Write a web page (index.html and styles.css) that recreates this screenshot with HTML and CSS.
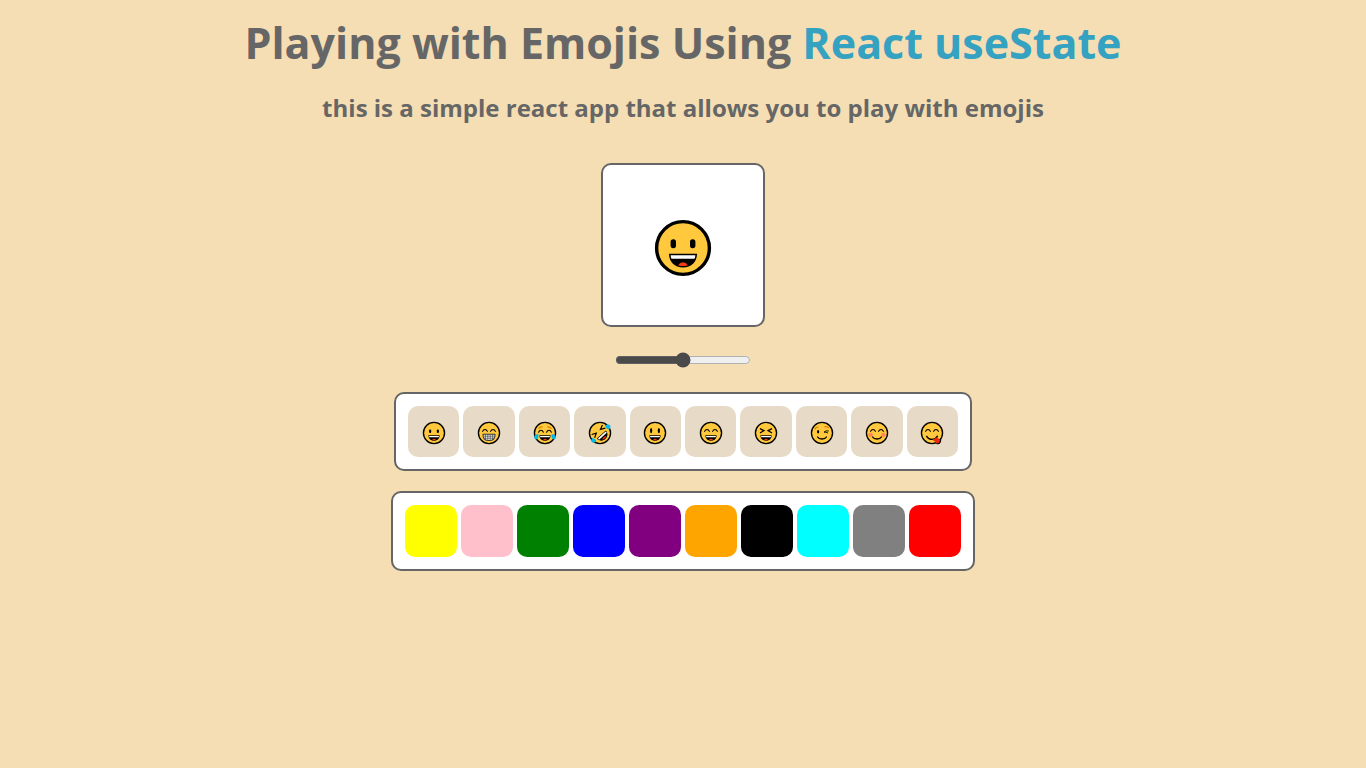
FILE: index.html
```html
<!DOCTYPE html>
<html lang="en">
<head>
<meta charset="utf-8">
<meta name="viewport" content="width=device-width, initial-scale=1">
<title>Playing with Emojis</title>
<link rel="stylesheet" href="styles.css">
</head>
<body>
<svg class="sprite" aria-hidden="true">
  <symbol id="face" viewBox="-30 -30 60 60"><circle r="26.4" fill="#ffc83d" stroke="#000" stroke-width="3.4"/></symbol>
  <symbol id="laugh" viewBox="-30 -30 60 60">
    <path d="M-14 5.7H14C14 14 8.500 19.500 0 19.500S-14 14-14 5.700Z"/>
    <path d="M-12.300 7.300H12.300Q12.300 9.500 11.500 10.800H-11.500Q-12.300 9.500-12.300 7.300Z" fill="#fff"/>
    <path d="M-5 17.200Q-3 14.300 0 14.300T5 17.200Q0 19 -5 17.200Z" fill="#f03a17"/>
  </symbol>
  <symbol id="arcs" viewBox="-30 -30 60 60"><path d="M-16-4Q-14-9-10-9T-4-4M4-4Q6-9 10-9T16-4" fill="none" stroke="#000" stroke-width="2.600" stroke-linecap="round"/></symbol>
  <symbol id="smile" viewBox="-30 -30 60 60"><path d="M-11 10Q-8 15 0 15T11 10" fill="none" stroke="#000" stroke-width="3.400" stroke-linecap="round"/></symbol>
  <symbol id="grin" viewBox="-30 -30 60 60"><use href="#face" x="-30" y="-30" width="60" height="60"/><rect x="-12.400" y="-8.800" width="5.400" height="9" rx="2.600"/><rect x="7" y="-8.800" width="5.400" height="9" rx="2.600"/><use href="#laugh" x="-30" y="-30" width="60" height="60"/></symbol>
</svg>
<main class="app">
  <h1 class="title">Playing with Emojis Using <span class="accent">React useState</span></h1>
  <h2 class="subtitle">this is a simple react app that allows you to play with emojis</h2>
  <div class="stage"><svg class="emoji-large" role="img" aria-label="Grinning face"><use href="#grin"/></svg></div>
  <input class="size" type="range" min="0" max="100" value="50" aria-label="Emoji size">
  <div class="panel emojis">
    <button class="tile" type="button" aria-label="Grinning face"><svg class="emoji"><use href="#grin"/></svg></button>
    <button class="tile" type="button" aria-label="Beaming face"><svg class="emoji" viewBox="-30 -30 60 60"><use href="#face" x="-30" y="-30" width="60" height="60"/><use href="#arcs" x="-30" y="-30" width="60" height="60"/><path d="M-15 3H15C16 14 10 19 0 19S-16 14-15 3Z" fill="#fff" stroke="#333" stroke-width="2.600"/><path d="M-15 8H15M-13 13H13M-9 3V17M-3 3V19M3 3V19M9 3V17" fill="none" stroke="#444" stroke-width="1.800"/></svg></button>
    <button class="tile" type="button" aria-label="Tears of joy"><svg class="emoji" viewBox="-30 -30 60 60"><use href="#face" x="-30" y="-30" width="60" height="60"/><path d="M-16-11Q-12-16-6-15M6-15Q12-16 16-11" fill="none" stroke="#d67d00" stroke-width="3"/><use href="#arcs" x="-30" y="-28" width="60" height="60"/><use href="#laugh" x="-30" y="-30" width="60" height="60"/><path d="M-16 3C-22 2-28 6-27 12C-26 17-19 17-17 12ZM16 3C22 2 28 6 27 12C26 17 19 17 17 12Z" fill="#00b9e8"/></svg></button>
    <button class="tile" type="button" aria-label="Rolling on the floor laughing"><svg class="emoji" viewBox="-30 -30 60 60"><use href="#face" x="-30" y="-30" width="60" height="60"/><g transform="rotate(-42)"><path d="M-18-11L-7-6L-18 0M18-11L7-6L18 0" fill="none" stroke="#000" stroke-width="3"/><path d="M-15 5H15C15 14 9 20 0 20S-15 14-15 5Z"/><path d="M-13 6.500H13V11H-13Z" fill="#fff"/><ellipse cy="16" rx="6" ry="2" fill="#f03a17"/></g><path d="M12-19Q22-24 26-18Q27-9 20-9Q15-12 12-19ZM-18 12Q-25 18-20 23Q-12 27-9 18Z" fill="#00b9e8"/></svg></button>
    <button class="tile" type="button" aria-label="Big eyes grin"><svg class="emoji" viewBox="-30 -30 60 60"><use href="#face" x="-30" y="-30" width="60" height="60"/><ellipse cx="-9.700" cy="-6" rx="2.800" ry="6.500"/><ellipse cx="9.700" cy="-6" rx="2.800" ry="6.500"/><use href="#laugh" x="-30" y="-30" width="60" height="60"/></svg></button>
    <button class="tile" type="button" aria-label="Smiling eyes grin"><svg class="emoji" viewBox="-30 -30 60 60"><use href="#face" x="-30" y="-30" width="60" height="60"/><use href="#arcs" x="-30" y="-30" width="60" height="60"/><use href="#laugh" x="-30" y="-30" width="60" height="60"/></svg></button>
    <button class="tile" type="button" aria-label="Squinting face"><svg class="emoji" viewBox="-30 -30 60 60"><use href="#face" x="-30" y="-30" width="60" height="60"/><path d="M-15-11L-5-6L-15 0M15-11L5-6L15 0" fill="none" stroke="#000" stroke-width="3"/><use href="#laugh" x="-30" y="-30" width="60" height="60"/></svg></button>
    <button class="tile" type="button" aria-label="Winking face"><svg class="emoji" viewBox="-30 -30 60 60"><use href="#face" x="-30" y="-30" width="60" height="60"/><path d="M-18-9Q-16-15-9-15M6-15Q12-18 17-12" fill="none" stroke="#d67d00" stroke-width="3"/><ellipse cx="-9.700" cy="-3" rx="2.800" ry="4.500"/><path d="M17-5Q9-7 5-2Q9-3 15 0" fill="none" stroke="#000" stroke-width="2.200"/><use href="#smile" x="-30" y="-30" width="60" height="60"/></svg></button>
    <button class="tile" type="button" aria-label="Blushing face"><svg class="emoji" viewBox="-30 -30 60 60"><use href="#face" x="-30" y="-30" width="60" height="60"/><circle cx="-16" cy="5" r="5.500" fill="#ff8a57"/><circle cx="16" cy="5" r="5.500" fill="#ff8a57"/><use href="#arcs" x="-30" y="-30" width="60" height="60"/><use href="#smile" x="-30" y="-30" width="60" height="60"/></svg></button>
    <button class="tile" type="button" aria-label="Savoring food"><svg class="emoji" viewBox="-30 -30 60 60"><use href="#face" x="-30" y="-30" width="60" height="60"/><use href="#arcs" x="-30" y="-30" width="60" height="60"/><path d="M-14 7Q-9 16 1 16Q10 15 14 7" fill="none" stroke="#000" stroke-width="3.400"/><path d="M2 16L14 10Q17 16 21 19Q23 27 15 27Q10 27 8 21Q3 21 2 16Z" fill="#e8290b"/><path d="M11 26Q21 30 22 16" fill="none" stroke="#000" stroke-width="2.600"/></svg></button>
  </div>
  <div class="panel colors">
    <button class="swatch yellow" type="button" aria-label="Yellow"></button>
    <button class="swatch pink" type="button" aria-label="Pink"></button>
    <button class="swatch green" type="button" aria-label="Green"></button>
    <button class="swatch blue" type="button" aria-label="Blue"></button>
    <button class="swatch purple" type="button" aria-label="Purple"></button>
    <button class="swatch orange" type="button" aria-label="Orange"></button>
    <button class="swatch black" type="button" aria-label="Black"></button>
    <button class="swatch cyan" type="button" aria-label="Cyan"></button>
    <button class="swatch gray" type="button" aria-label="Gray"></button>
    <button class="swatch red" type="button" aria-label="Red"></button>
  </div>
</main>
</body>
</html>
```
FILE: styles.css
```css
* { box-sizing: border-box; }
body {
  margin: 0;
  background: #f5deb3;
  color: #666;
  font-family: "Segoe UI", "Open Sans", "Noto Sans", sans-serif;
}
.sprite { display: block; width: 0; height: 0; }
.app {
  display: flex;
  flex-direction: column;
  align-items: center;
  padding: 13px 16px;
}
.title, .subtitle { margin: 0; font-weight: 660; text-align: center; }
.title { font-size: 43px; line-height: 60px; }
.accent { color: #35a2c2; }
.subtitle { margin-top: 19px; font-size: 24px; line-height: 32px; }
.stage {
  display: grid;
  place-items: center;
  width: 164px;
  height: 164px;
  margin-top: 39px;
  padding-top: 6px;
  border: 2px solid #666;
  border-radius: 10px;
  background: #fff;
}
.emoji-large { width: 60px; height: 60px; }
.size { width: 136px; height: 16px; margin: 25px 0 0; accent-color: #4a4a4a; }
.panel {
  display: flex;
  gap: 4px;
  max-width: 100%;
  padding: 12px;
  border: 2px solid #666;
  border-radius: 10px;
  background: #fff;
}
.emojis { width: 578px; margin-top: 24px; }
.colors { width: 584px; margin-top: 20px; }
.tile, .swatch {
  flex: 1;
  min-width: 0;
  padding: 0;
  border: 0;
  border-radius: 10px;
  cursor: pointer;
}
.tile {
  display: grid;
  place-items: center;
  height: 51px;
  padding-top: 3px;
  background: #e7dbc7;
}
.emoji { width: 24px; height: 24px; }
.swatch { height: 52px; }
.yellow { background: yellow; }
.pink { background: pink; }
.green { background: green; }
.blue { background: blue; }
.purple { background: purple; }
.orange { background: orange; }
.black { background: black; }
.cyan { background: cyan; }
.gray { background: gray; }
.red { background: red; }
```
